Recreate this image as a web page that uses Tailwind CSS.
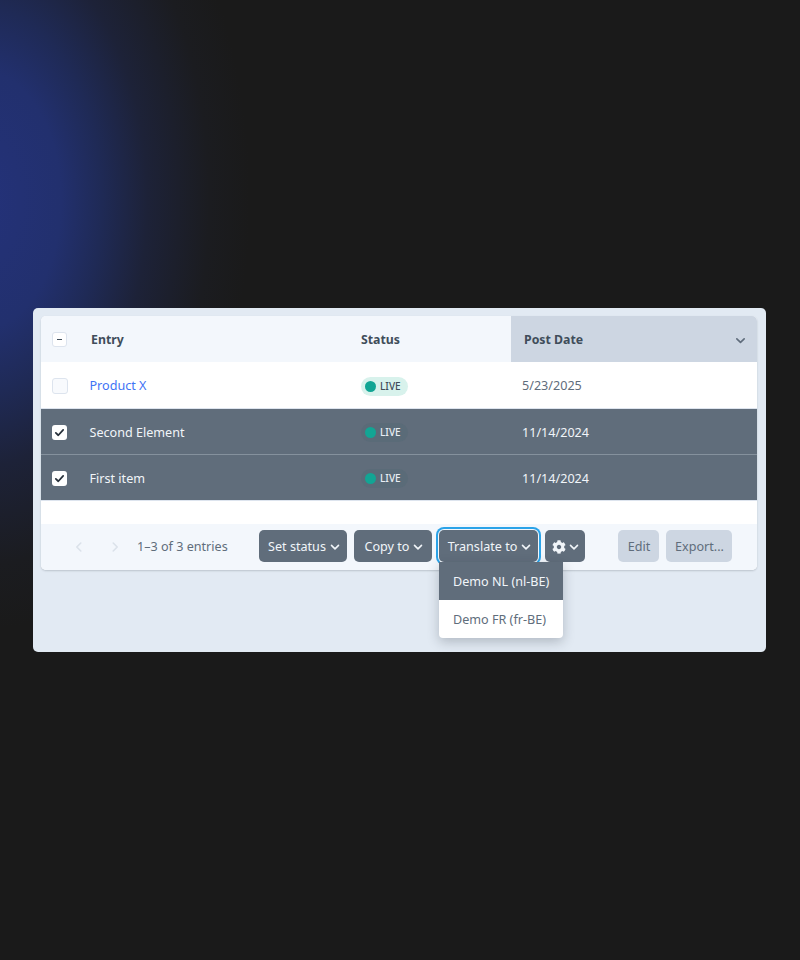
<!DOCTYPE html>
<html lang="en">
<head>
  <meta charset="UTF-8">
  <title>Entries</title>
  <script src="https://cdn.jsdelivr.net/npm/@tailwindcss/browser@4"></script>
</head>
<body class="m-0 h-[960px] w-[800px] overflow-hidden bg-[#1a1a1a] bg-[radial-gradient(ellipse_270px_430px_at_-20px_200px,#24327a_0%,#22306e_30%,#1f2a56_45%,#1d2238_62%,#1b1c20_85%,#1a1a1a_100%)] font-['Noto_Sans',sans-serif]">

  <div class="pl-[33px] pt-[308px]">
    <!-- Panel -->
    <div class="h-[344px] w-[733px] rounded-[5px] bg-[#e2eaf3] p-2">
      <!-- Card -->
      <div class="relative h-[254px] w-[716px] rounded-[5px] bg-white shadow-[0_1px_2px_rgba(31,41,51,0.2)]">

        <!-- Header -->
        <div class="flex h-[46px] items-center rounded-t-[5px] bg-[#f3f7fc] text-[12.3px] font-bold text-[#3f4d5a]">
          <div class="w-[50px] pl-[11px]">
            <div class="flex h-[15px] w-[15px] items-center justify-center rounded-[3px] border border-[#dde4ee] bg-white">
              <div class="h-px w-[5px] bg-[#3f4d5a]"></div>
            </div>
          </div>
          <div class="w-[270px] pt-[3px]">Entry</div>
          <div class="w-[150px] pt-[3px]">Status</div>
          <div class="flex h-full flex-1 items-center justify-between rounded-tr-[5px] bg-[#cdd6e2] pl-[13px] pr-[11px]">
            <span class="pt-[3px]">Post Date</span>
            <svg class="mt-[3px] h-[11px] w-[11px] text-[#5f6c7b]" viewBox="0 0 12 12" fill="none" stroke="currentColor" stroke-width="1.8" stroke-linecap="round" stroke-linejoin="round"><path d="M2 4.2 6 8l4-3.8"/></svg>
          </div>
        </div>

        <!-- Rows -->
        <div class="flex h-[47px] items-center border-b border-[#dde4ee] bg-white text-[12.6px] text-[#5f6c7b]">
          <div class="w-[48.5px] pl-[11px] pt-[1px]">
            <div class="h-[16px] w-[16px] rounded-[3px] border border-[#dde4ee] bg-[#f8fafd]"></div>
          </div>
          <div class="w-[271.5px] pt-[3px] text-[#3f73f5]">Product X</div>
          <div class="w-[150px] pt-[2px]">
            <div class="flex h-[19px] w-[47px] items-center gap-[4px] rounded-full bg-[#d8f2ec] pl-[4px] text-[10px] font-medium text-[#3f4d5a]">
              <span class="h-[11px] w-[11px] rounded-full bg-[#12a594]"></span>LIVE
            </div>
          </div>
          <div class="pl-[11px] pt-[3px]">5/23/2025</div>
        </div>

        <div class="flex h-[46px] items-center border-b border-[#85919d] bg-[#606d7b] text-[12.6px] text-[#f1f5f9]">
          <div class="w-[48.5px] pl-[11px] pt-[1px]">
            <div class="flex h-[15px] w-[15px] items-center justify-center rounded-[3px] bg-white">
              <svg class="h-[11px] w-[11px]" viewBox="0 0 12 12" fill="none" stroke="#27303a" stroke-width="1.9" stroke-linecap="round" stroke-linejoin="round"><path d="M2 6.4 4.7 9 10 3.2"/></svg>
            </div>
          </div>
          <div class="w-[271.5px] pt-[3px]">Second Element</div>
          <div class="w-[150px] pt-[2px]">
            <div class="flex h-[19px] w-[47px] items-center gap-[4px] rounded-full bg-[#5a6b78] pl-[4px] text-[10px] font-medium text-[#e9eef4]">
              <span class="h-[11px] w-[11px] rounded-full bg-[#12a594]"></span>LIVE
            </div>
          </div>
          <div class="pl-[11px] pt-[3px]">11/14/2024</div>
        </div>

        <div class="flex h-[45px] items-center bg-[#606d7b] text-[12.6px] text-[#f1f5f9]">
          <div class="w-[48.5px] pl-[11px] pt-[1px]">
            <div class="flex h-[15px] w-[15px] items-center justify-center rounded-[3px] bg-white">
              <svg class="h-[11px] w-[11px]" viewBox="0 0 12 12" fill="none" stroke="#27303a" stroke-width="1.9" stroke-linecap="round" stroke-linejoin="round"><path d="M2 6.4 4.7 9 10 3.2"/></svg>
            </div>
          </div>
          <div class="w-[271.5px] pt-[3px]">First item</div>
          <div class="w-[150px] pt-[2px]">
            <div class="flex h-[19px] w-[47px] items-center gap-[4px] rounded-full bg-[#5a6b78] pl-[4px] text-[10px] font-medium text-[#e9eef4]">
              <span class="h-[11px] w-[11px] rounded-full bg-[#12a594]"></span>LIVE
            </div>
          </div>
          <div class="pl-[11px] pt-[3px]">11/14/2024</div>
        </div>

        <div class="h-[24px] border-t border-[#dde4ee]"></div>

        <!-- Footer -->
        <div class="flex h-[46px] items-center rounded-b-[5px] bg-[#f3f7fc] pb-[2px] text-[12.6px]">
          <svg class="ml-[32px] mt-[2px] h-[12px] w-[12px] text-[#dbe2ea]" viewBox="0 0 12 12" fill="none" stroke="currentColor" stroke-width="1.6" stroke-linecap="round" stroke-linejoin="round"><path d="M7.8 2 3.8 6l4 4"/></svg>
          <svg class="ml-[24px] mt-[2px] h-[12px] w-[12px] text-[#dbe2ea]" viewBox="0 0 12 12" fill="none" stroke="currentColor" stroke-width="1.6" stroke-linecap="round" stroke-linejoin="round"><path d="m4.2 2 4 4-4 4"/></svg>
          <span class="ml-[16px] w-[122px] pt-[2px] text-[#606d7b]">1–3 of 3 entries</span>

          <button class="flex h-[32px] w-[88px] items-center justify-center gap-[4px] rounded-[5px] bg-[#606d7b] pl-[2px] pt-[2px] text-[#f1f5f9]">Set status
            <svg class="h-[10px] w-[10px]" viewBox="0 0 12 12" fill="none" stroke="currentColor" stroke-width="1.9" stroke-linecap="round" stroke-linejoin="round"><path d="M1.8 4 6 8.2 10.2 4"/></svg>
          </button>
          <button class="ml-[7px] flex h-[32px] w-[78px] items-center justify-center gap-[4px] rounded-[5px] bg-[#606d7b] pl-[2px] pt-[2px] text-[#f1f5f9]">Copy to
            <svg class="h-[10px] w-[10px]" viewBox="0 0 12 12" fill="none" stroke="currentColor" stroke-width="1.9" stroke-linecap="round" stroke-linejoin="round"><path d="M1.8 4 6 8.2 10.2 4"/></svg>
          </button>
          <button class="ml-[7px] flex h-[32px] w-[99px] items-center justify-center gap-[4px] rounded-[5px] bg-[#606d7b] pl-[2px] pt-[2px] text-[#f1f5f9] shadow-[0_0_0_1px_#f3f7fc,0_0_0_3px_#2ba3e8]">Translate to
            <svg class="h-[10px] w-[10px]" viewBox="0 0 12 12" fill="none" stroke="currentColor" stroke-width="1.9" stroke-linecap="round" stroke-linejoin="round"><path d="M1.8 4 6 8.2 10.2 4"/></svg>
          </button>
          <button class="ml-[7px] flex h-[32px] w-[40px] items-center justify-center gap-[3px] rounded-[5px] bg-[#606d7b] pt-[2px] text-[#f1f5f9]">
            <svg class="h-[14px] w-[14px]" viewBox="0 0 512 512" fill="currentColor"><path d="M487.4 315.7l-42.6-24.6c4.3-23.2 4.3-47 0-70.2l42.6-24.6c4.9-2.8 7.1-8.6 5.5-14-11.1-35.6-30-67.8-54.7-94.6-3.8-4.1-10-5.1-14.8-2.3L380.8 110c-17.9-15.4-38.5-27.3-60.8-35.1V25.8c0-5.6-3.9-10.5-9.4-11.7-36.7-8.2-74.3-7.8-109.2 0-5.5 1.2-9.4 6.1-9.4 11.7V75c-22.2 7.9-42.8 19.8-60.8 35.1L88.7 85.5c-4.9-2.8-11-1.9-14.8 2.3-24.7 26.7-43.6 58.9-54.7 94.6-1.7 5.4.6 11.2 5.5 14L67.3 221c-4.3 23.2-4.3 47 0 70.2l-42.6 24.6c-4.9 2.8-7.1 8.6-5.5 14 11.1 35.6 30 67.8 54.7 94.6 3.8 4.1 10 5.1 14.8 2.3l42.6-24.6c17.9 15.4 38.5 27.3 60.8 35.1v49.2c0 5.6 3.9 10.5 9.4 11.7 36.7 8.2 74.3 7.8 109.2 0 5.5-1.2 9.4-6.1 9.4-11.7v-49.2c22.2-7.9 42.8-19.8 60.8-35.1l42.6 24.6c4.9 2.8 11 1.9 14.8-2.3 24.7-26.7 43.6-58.9 54.7-94.6 1.5-5.5-.7-11.3-5.6-14.1zM256 336c-44.1 0-80-35.9-80-80s35.9-80 80-80 80 35.9 80 80-35.9 80-80 80z"/></svg>
            <svg class="h-[10px] w-[10px]" viewBox="0 0 12 12" fill="none" stroke="currentColor" stroke-width="1.9" stroke-linecap="round" stroke-linejoin="round"><path d="M1.8 4 6 8.2 10.2 4"/></svg>
          </button>
          <button class="ml-[33px] h-[32px] w-[41px] rounded-[5px] bg-[#cdd6e2] pl-[1px] pt-[2px] text-[#606d7b]">Edit</button>
          <button class="ml-[7px] h-[32px] w-[66px] rounded-[5px] bg-[#cdd6e2] pl-[1px] pt-[2px] text-[#606d7b]">Export...</button>
        </div>

        <!-- Dropdown -->
        <div class="absolute left-[398px] top-[246px] w-[124px] overflow-hidden rounded-b-[4px] bg-white text-[12.6px] shadow-[0_4px_12px_rgba(31,41,51,0.25)]">
          <div class="flex h-[38px] items-center bg-[#606d7b] pl-[14px] pt-[3px] text-[#f1f5f9]">Demo NL (nl-BE)</div>
          <div class="flex h-[38px] items-center pl-[14px] pt-[3px] text-[#606d7b]">Demo FR (fr-BE)</div>
        </div>
      </div>
    </div>
  </div>
</body>
</html>
